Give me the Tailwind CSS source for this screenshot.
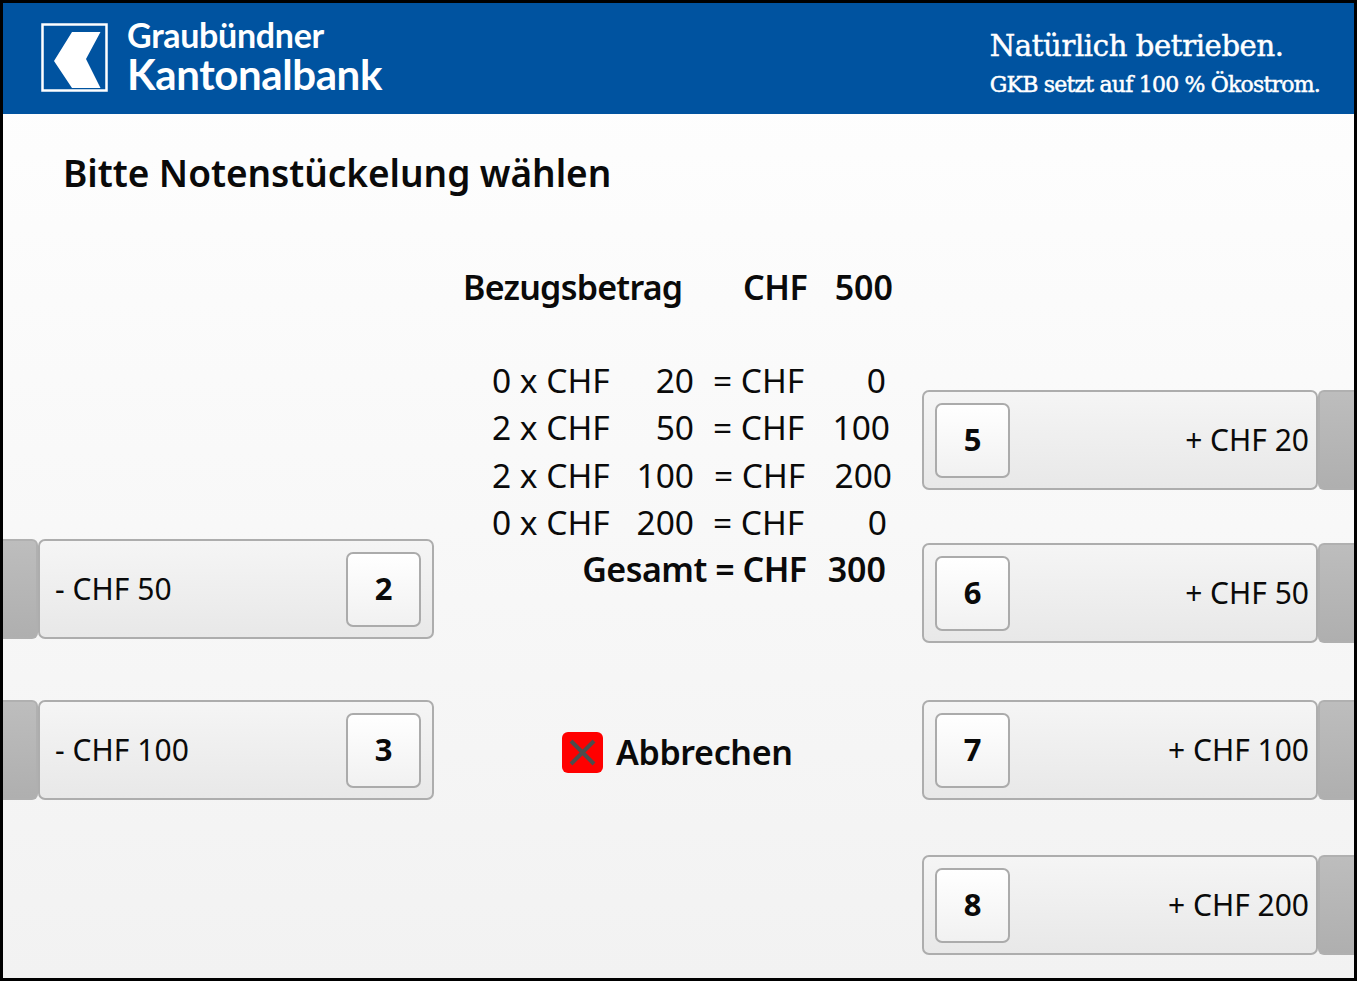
<!DOCTYPE html>
<html><head><meta charset="utf-8">
<script src="https://cdn.jsdelivr.net/npm/@tailwindcss/browser@4"></script>
</head>
<body class="m-0">
<div class="w-[1357px] h-[981px] border-[3px] border-black overflow-hidden flex flex-col bg-gradient-to-b from-white to-[#f2f2f2] font-['Noto_Sans',sans-serif] text-[#0a0a0a]">
  <header class="h-[111px] shrink-0 bg-[#0053a0] flex items-center justify-between pl-[38px] pr-[34px] text-white">
    <div class="flex items-center gap-[18px]">
      <svg width="68" height="70" viewBox="0 0 68 70" class="mt-[-2px]">
        <rect x="1.5" y="1.5" width="64" height="66" fill="none" stroke="#fff" stroke-width="2.5"/>
        <path d="M59.5 9 L31 9 L13 38 L31 65 L59.5 65 L45 36 Z" fill="#fff"/>
      </svg>
      <div class="font-['Lato',sans-serif] mt-[-7px]">
        <div class="text-[34px] leading-[38px] font-bold tracking-[-0.3px] whitespace-nowrap">Graubündner</div>
        <div class="text-[42px] leading-[40px] font-bold tracking-[-0.4px] whitespace-nowrap">Kantonalbank</div>
      </div>
    </div>
    <div class="font-['DejaVu_Serif',serif] mt-[13px] [-webkit-text-stroke:0.5px_white] whitespace-nowrap">
      <div class="text-[29px] leading-[39px] tracking-[-0.35px]">Natürlich betrieben.</div>
      <div class="text-[22px] leading-[38px] tracking-[-0.8px]">GKB setzt auf 100 % Ökostrom.</div>
    </div>
  </header>
  <main class="flex-1 flex flex-col">
    <h1 class="h-[119px] shrink-0 pl-[60px] pt-[33px] text-[37px] leading-[52px] font-semibold tracking-[-0.05px]">Bitte Notenstückelung wählen</h1>
    <div class="flex-1 flex">
      <div class="w-[431px] shrink-0 pt-[306px] flex flex-col gap-[61px]">
        <div class="flex h-[100px]">
          <div class="w-[35px] rounded-r-[6px] bg-gradient-to-b from-[#bdbdbd] to-[#afafaf] border-y-2 border-r-2 border-[#b0b0b0]"></div>
          <div class="flex-1 flex items-center justify-between pl-[15px] pr-[11px] rounded-[7px] border-2 border-[#adadad] bg-gradient-to-b from-[#f5f5f5] to-[#e8e8e8]">
            <span class="text-[30px] tracking-[0.05px] mt-[-2px]">- CHF 50</span>
            <div class="w-[75px] h-[75px] flex items-center justify-center rounded-[7px] border-2 border-[#ababab] bg-gradient-to-b from-white to-[#f1f1f1] text-[31px] font-bold pb-[2px]">2</div>
          </div>
        </div>
        <div class="flex h-[100px]">
          <div class="w-[35px] rounded-r-[6px] bg-gradient-to-b from-[#bdbdbd] to-[#afafaf] border-y-2 border-r-2 border-[#b0b0b0]"></div>
          <div class="flex-1 flex items-center justify-between pl-[15px] pr-[11px] rounded-[7px] border-2 border-[#adadad] bg-gradient-to-b from-[#f5f5f5] to-[#e8e8e8]">
            <span class="text-[30px] tracking-[0.05px] mt-[-2px]">- CHF 100</span>
            <div class="w-[75px] h-[75px] flex items-center justify-center rounded-[7px] border-2 border-[#ababab] bg-gradient-to-b from-white to-[#f1f1f1] text-[31px] font-bold pb-[2px]">3</div>
          </div>
        </div>
      </div>
      <div class="w-[488px] shrink-0 flex flex-col whitespace-nowrap">
        <div class="mt-[30px] ml-[29px] flex text-[34px] leading-[48px] font-semibold">
          <span class="w-[280px] tracking-[-0.75px]">Bezugsbetrag</span><span class="w-[63px] tracking-[-0.4px]">CHF</span><span class="w-[87px] text-right">500</span>
        </div>
        <div class="mt-[46px] ml-[58px] w-[403px] text-[33.5px] leading-[47.25px]">
          <div class="flex"><span class="w-[120px]">0 x CHF</span><span class="w-[82px] text-right">20</span><span class="ml-[19px] w-[90px]">= CHF</span><span class="w-[83px] text-right">0</span></div>
          <div class="flex"><span class="w-[120px]">2 x CHF</span><span class="w-[82px] text-right">50</span><span class="ml-[19px] w-[90px]">= CHF</span><span class="w-[87px] text-right">100</span></div>
          <div class="flex"><span class="w-[120px]">2 x CHF</span><span class="w-[82px] text-right">100</span><span class="ml-[20px] w-[90px]">= CHF</span><span class="w-[88px] text-right">200</span></div>
          <div class="flex"><span class="w-[120px]">0 x CHF</span><span class="w-[82px] text-right">200</span><span class="ml-[19px] w-[90px]">= CHF</span><span class="w-[84px] text-right">0</span></div>
          <div class="flex justify-end pr-[9px] font-semibold text-[34px] tracking-[-0.5px]"><span>Gesamt = CHF</span><span class="ml-[21px] tracking-normal">300</span></div>
        </div>
        <div class="mt-[138px] ml-[128px] flex items-center gap-[13px]">
          <svg width="41" height="41" viewBox="0 0 41 41">
            <rect width="41" height="41" rx="6" fill="#ff0000"/>
            <path d="M9 9 L32 32 M32 9 L9 32" stroke="#4d4d4d" stroke-width="4"/>
          </svg>
          <span class="text-[34px] leading-[42px] font-semibold tracking-[-0.35px]">Abbrechen</span>
        </div>
      </div>
      <div class="flex-1 pt-[157px] flex flex-col">
        <div class="flex h-[100px]">
          <div class="w-[396px] flex items-center justify-between pl-[11px] pr-[7px] rounded-[7px] border-2 border-[#adadad] bg-gradient-to-b from-[#f5f5f5] to-[#e8e8e8]">
            <div class="w-[75px] h-[75px] flex items-center justify-center rounded-[7px] border-2 border-[#ababab] bg-gradient-to-b from-white to-[#f1f1f1] text-[31px] font-bold pb-[2px]">5</div>
            <span class="text-[30px] mt-[-2px]">+ CHF 20</span>
          </div>
          <div class="flex-1 rounded-l-[6px] bg-gradient-to-b from-[#bdbdbd] to-[#afafaf] border-y-2 border-l-2 border-[#b0b0b0]"></div>
        </div>
        <div class="flex h-[100px] mt-[53px]">
          <div class="w-[396px] flex items-center justify-between pl-[11px] pr-[7px] rounded-[7px] border-2 border-[#adadad] bg-gradient-to-b from-[#f5f5f5] to-[#e8e8e8]">
            <div class="w-[75px] h-[75px] flex items-center justify-center rounded-[7px] border-2 border-[#ababab] bg-gradient-to-b from-white to-[#f1f1f1] text-[31px] font-bold pb-[2px]">6</div>
            <span class="text-[30px] mt-[-2px]">+ CHF 50</span>
          </div>
          <div class="flex-1 rounded-l-[6px] bg-gradient-to-b from-[#bdbdbd] to-[#afafaf] border-y-2 border-l-2 border-[#b0b0b0]"></div>
        </div>
        <div class="flex h-[100px] mt-[57px]">
          <div class="w-[396px] flex items-center justify-between pl-[11px] pr-[7px] rounded-[7px] border-2 border-[#adadad] bg-gradient-to-b from-[#f5f5f5] to-[#e8e8e8]">
            <div class="w-[75px] h-[75px] flex items-center justify-center rounded-[7px] border-2 border-[#ababab] bg-gradient-to-b from-white to-[#f1f1f1] text-[31px] font-bold pb-[2px]">7</div>
            <span class="text-[30px] mt-[-2px]">+ CHF 100</span>
          </div>
          <div class="flex-1 rounded-l-[6px] bg-gradient-to-b from-[#bdbdbd] to-[#afafaf] border-y-2 border-l-2 border-[#b0b0b0]"></div>
        </div>
        <div class="flex h-[100px] mt-[55px]">
          <div class="w-[396px] flex items-center justify-between pl-[11px] pr-[7px] rounded-[7px] border-2 border-[#adadad] bg-gradient-to-b from-[#f5f5f5] to-[#e8e8e8]">
            <div class="w-[75px] h-[75px] flex items-center justify-center rounded-[7px] border-2 border-[#ababab] bg-gradient-to-b from-white to-[#f1f1f1] text-[31px] font-bold pb-[2px]">8</div>
            <span class="text-[30px] mt-[-2px]">+ CHF 200</span>
          </div>
          <div class="flex-1 rounded-l-[6px] bg-gradient-to-b from-[#bdbdbd] to-[#afafaf] border-y-2 border-l-2 border-[#b0b0b0]"></div>
        </div>
      </div>
    </div>
  </main>
</div>
</body></html>
